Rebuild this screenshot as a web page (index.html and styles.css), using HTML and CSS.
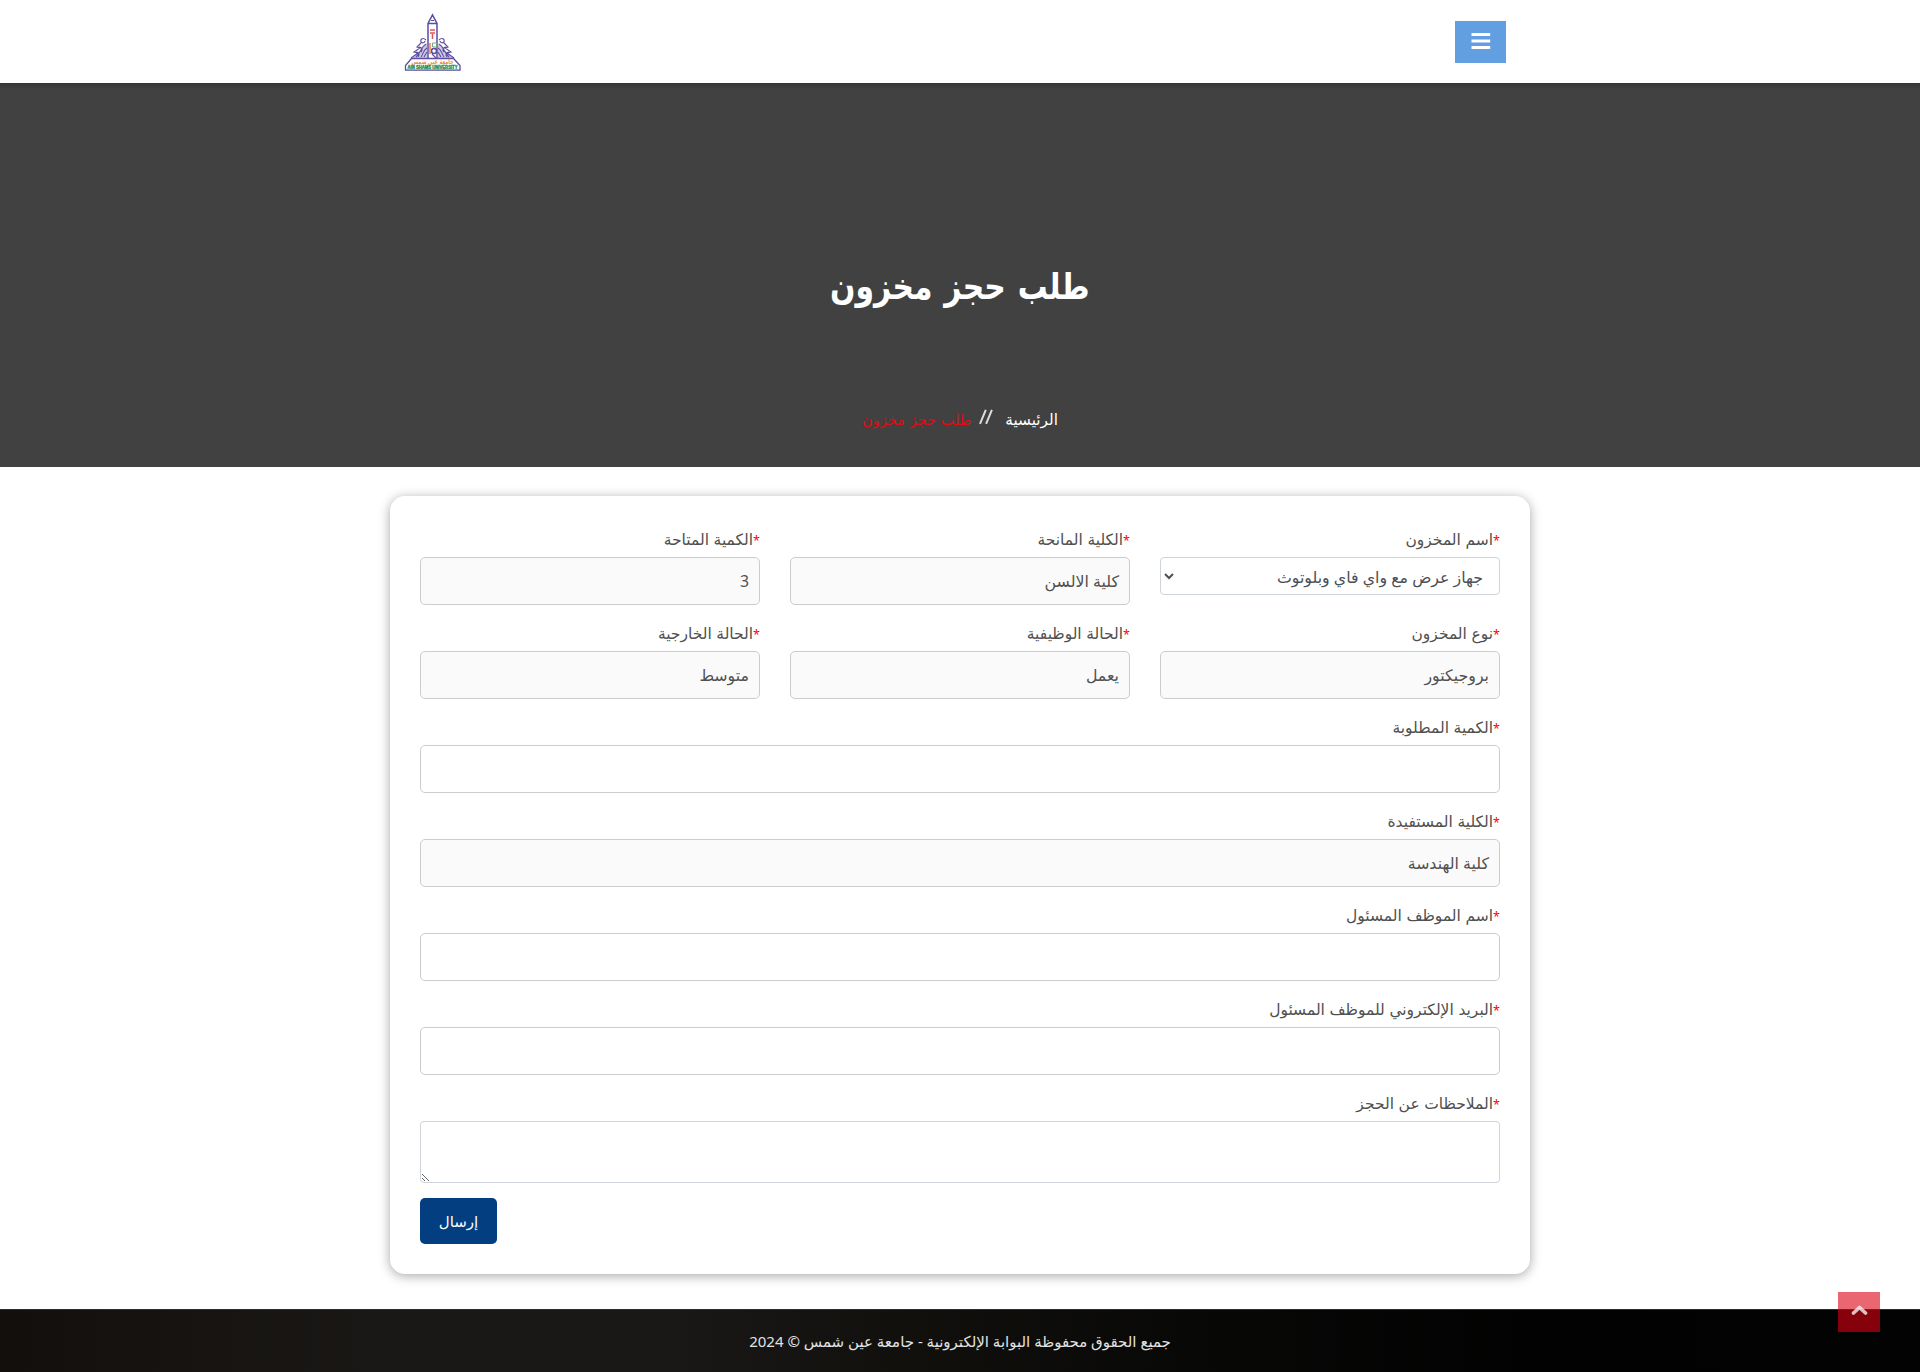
FILE: index.html
```html
<!DOCTYPE html>
<html lang="ar" dir="rtl">
<head>
<meta charset="utf-8">
<title>طلب حجز مخزون</title>
<link rel="stylesheet" href="styles.css">
</head>
<body>
<header class="topbar">
  <div class="topbar-inner">
    <button class="menu-btn" type="button" aria-label="القائمة">
      <svg width="20" height="18" viewBox="0 0 20 18"><path fill="#fff" d="M.5 1h18.700v3H.5zM.5 7.500h18.700v3H.5zM.5 14h18.700v3H.5z"/></svg>
    </button>
    <svg class="logo" width="58" height="58" viewBox="0 0 58 58" role="img">
      <g fill="none" stroke="#5c4da0" stroke-width="1.100">
        <path fill="#8f86bd" fill-opacity=".45" stroke="none" d="M23 29L8 44h15zM34 29l15 15H34z"/>
        <path stroke-width="1.500" d="M24 44V9.500L28.500.8 33 9.500V44M24 9.500h9"/>
        <path d="M27 6.500h3"/>
        <path d="M22 26c-3-3-6-1-5 2 2 2 4 0 4-1M17 29l-4 4 3 1-6 4 4 1-7 5M22 30c-5 3-4 7-10 13M23 34c-4 2-3 5-6 9M23 38l-3 5M15 33c3 0 4 3 2 5M12 38c3 0 4 2 2 5"/>
        <path d="M35 26c3-3 6-1 5 2-2 2-4 0-4-1M40 29l4 4-3 1 6 4-4 1 7 5M35 30c5 3 4 7 10 13M34 34c4 2 3 5 6 9M34 38l3 5M42 33c-3 0-4 3-2 5M45 38c-3 0-4 2-2 5"/>
        <circle cx="30" cy="37" r="2.500" stroke-width="1.600"/><path d="M28 40l4 4"/>
        <path stroke-width="1.300" d="M7.500 44.500h42l6.500 7v4.600H1.500v-4.600z"/>
      </g>
      <path fill="none" stroke="#e0525a" stroke-width="1.500" d="M26 16h5M26 19h5M28.500 20v5"/>
      <path fill="none" stroke="#efa06f" stroke-width="2" d="M26 29v11"/>
      <path fill="none" stroke="#79a785" stroke-width="1" d="M28.500 29h4v4h-4z"/>
      <text class="logo-ar" x="28.500" y="50.200" text-anchor="middle" textLength="42" lengthAdjust="spacingAndGlyphs">جامعة عين شمس</text>
      <text class="logo-en" x="28.500" y="55" text-anchor="middle" direction="ltr" textLength="50" lengthAdjust="spacingAndGlyphs">AIN SHAMS UNIVERSITY</text>
    </svg>
  </div>
</header>

<section class="hero">
  <h1 class="hero-title">طلب حجز مخزون</h1>
  <nav class="crumbs">
    <a class="crumb-home">الرئيسية</a>
    <svg class="crumb-sep" width="15" height="16" viewBox="0 0 15 16"><path stroke="#ddd" stroke-width="2" d="M6.800.8L1 14.800M12.900.8L7.100 14.800"/></svg>
    <span class="crumb-current">طلب حجز مخزون</span>
  </nav>
</section>

<main class="page">
  <form class="card">
    <div class="field"><label><i>*</i>اسم المخزون</label>
      <div class="control select"><span>جهاز عرض مع واي فاي وبلوتوث</span>
        <svg width="10" height="7" viewBox="0 0 10 7"><path fill="none" stroke="#495057" stroke-width="2" d="M1 1l4 4 4-4"/></svg></div></div>
    <div class="field"><label><i>*</i>الكلية المانحة</label><div class="control readonly">كلية الالسن</div></div>
    <div class="field"><label><i>*</i>الكمية المتاحة</label><div class="control readonly">3</div></div>
    <div class="field"><label><i>*</i>نوع المخزون</label><div class="control readonly">بروجيكتور</div></div>
    <div class="field"><label><i>*</i>الحالة الوظيفية</label><div class="control readonly">يعمل</div></div>
    <div class="field"><label><i>*</i>الحالة الخارجية</label><div class="control readonly">متوسط</div></div>
    <div class="field wide"><label><i>*</i>الكمية المطلوبة</label><div class="control"></div></div>
    <div class="field wide"><label><i>*</i>الكلية المستفيدة</label><div class="control readonly">كلية الهندسة</div></div>
    <div class="field wide"><label><i>*</i>اسم الموظف المسئول</label><div class="control"></div></div>
    <div class="field wide"><label><i>*</i>البريد الإلكتروني للموظف المسئول</label><div class="control"></div></div>
    <div class="field wide"><label><i>*</i>الملاحظات عن الحجز</label><textarea class="notes"></textarea></div>
    <button class="submit" type="button">إرسال</button>
  </form>
</main>

<footer class="footer">
  <p>جميع الحقوق محفوظة البوابة الإلكترونية - جامعة عين شمس © 2024</p>
  <a class="to-top"><svg width="17" height="11" viewBox="0 0 17 11"><path fill="none" stroke="#fff" stroke-width="3.700" stroke-linecap="round" stroke-linejoin="round" d="M2.500 8L8.500 2.500 14.500 8"/></svg></a>
</footer>
</body>
</html>
```
FILE: styles.css
```css
* { box-sizing: border-box; }
body { margin: 0; background: #fff; color: #505050; font: 16px/24px "Noto Sans", "DejaVu Sans", sans-serif; }
.topbar { height: 83px; background: #fff; }
.topbar-inner { width: 1140px; height: 83px; margin: 0 auto; padding: 0 24px 0 14px; display: flex; justify-content: space-between; align-items: center; }
.menu-btn { width: 51px; height: 42px; margin-top: 1px; padding: 0 0 2px; border: 0; background: #619fe0; display: flex; align-items: center; justify-content: center; }
.logo { margin-top: 3px; overflow: visible; }
.logo-ar { font: bold 7px "DejaVu Sans", sans-serif; fill: #ee8b4a; }
.logo-en { font: bold 4.500px "Liberation Sans", sans-serif; fill: #168a49; stroke: #168a49; stroke-width: .3px; }
.hero { height: 384px; background: linear-gradient(#353535, #414141 6px); color: #fff; display: flex; flex-direction: column; align-items: center; padding-top: 176px; }
.hero-title { margin: 0; font-size: 36px; line-height: 54px; font-weight: 700; white-space: nowrap; word-spacing: 5px; transform: scaleX(.828); }
.crumbs { margin-top: 94px; display: flex; align-items: center; height: 24px; white-space: nowrap; }
.crumb-home { font-size: 15.300px; }
.crumb-sep { margin: -4px 11px 0 8px; }
.crumb-current { color: #dc0d15; font-size: 14.500px; word-spacing: 1px; }
.page { padding: 29px 0 35px; }
.card { width: 1140px; height: 778px; margin: 0 auto; padding: 30px; background: #fff; border-radius: 15px; box-shadow: 0 2px 12px rgba(0,0,0,.35); display: grid; grid-template-columns: repeat(3, 340px); column-gap: 30px; grid-auto-rows: max-content; row-gap: 15px; align-content: start; }
.field { display: flex; flex-direction: column; }
.wide { grid-column: 1 / -1; }
label { height: 31px; line-height: 26px; font-size: 15.500px; word-spacing: .6px; white-space: nowrap; }
label i { color: #f00; font-style: normal; font-size: 12.500px; }
.control { height: 48px; border: 1px solid #ccc; border-radius: 5px; padding: 0 10px; line-height: 46px; font-size: 15.800px; white-space: nowrap; }
.readonly { background: #fafafa; }
.select { height: 38px; line-height: 38px; padding: 0 16px 0 3px; border-color: #ced4da; border-radius: 4px; display: flex; justify-content: space-between; color: #495057; }
.select svg { margin-top: 15px; }
.notes { height: 62px; border: 1px solid #ced4da; border-radius: 4px; background: #fff; resize: vertical; }
.submit { grid-column: 3; justify-self: end; width: 77px; height: 46px; border: 0; border-radius: 5px; padding: 0; background: #023e80; color: #fff; font: inherit; font-size: 15px; }
.footer { height: 63px; position: relative; border-top: 1px solid #2b2f2b; color: #e3e3e3; background: linear-gradient(90deg, #130f0c, #1a1816 20%, #191817 35%, #11100d 47%, #080807 62%, #030202 80%, #040303); display: flex; justify-content: center; }
.footer p { margin: 19px 0 0; font-size: 15px; line-height: 24px; white-space: nowrap; }
.to-top { position: absolute; left: 1838px; top: -18px; width: 42px; height: 40px; background: rgba(220,0,16,.6); display: flex; justify-content: center; padding-top: 13px; }
.to-top svg { opacity: .75; }
```
